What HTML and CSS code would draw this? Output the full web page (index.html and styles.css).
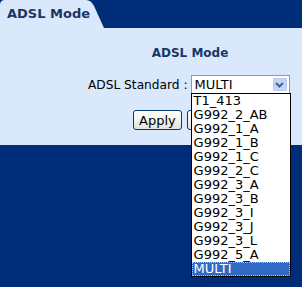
FILE: index.html
```html
<!DOCTYPE html>
<html lang="en">
<head>
  <meta charset="UTF-8" />
  <title>ADSL Mode</title>
  <link rel="stylesheet" href="styles.css">
</head>
<body>
  <div class="tab-bar">
    <div class="tab">
      <svg class="tab-shape" width="106" height="28" viewBox="0 0 106 28">
        <path d="M0 28 L0 5 Q0 0 5 0 L86 0 Q91 0 94 6 L104 28 Z" fill="#d9e9fb"/>
      </svg>
      <span class="tab-title">ADSL Mode</span>
    </div>
  </div>

  <div class="panel">
    <h1>ADSL Mode</h1>
    <div class="form-row">
      <label for="standard">ADSL Standard :</label>
      <div class="select-box">
        <div class="select">
          <span class="select-value">MULTI</span>
          <span class="select-arrow">
            <svg width="9" height="6" viewBox="0 0 9 6"><path d="M1 1 L4.5 4.5 L8 1" stroke="#4d6185" stroke-width="2" fill="none"/></svg>
          </span>
        </div>
        <ul class="select-list">
          <li>T1_413</li>
          <li>G992_2_AB</li>
          <li>G992_1_A</li>
          <li>G992_1_B</li>
          <li>G992_1_C</li>
          <li>G992_2_C</li>
          <li>G992_3_A</li>
          <li>G992_3_B</li>
          <li>G992_3_I</li>
          <li>G992_3_J</li>
          <li>G992_3_L</li>
          <li>G992_5_A</li>
          <li class="selected">MULTI</li>
        </ul>
      </div>
    </div>
    <div class="buttons">
      <button type="button" class="btn">Apply</button>
      <button type="button" class="btn">Cancel</button>
    </div>
  </div>
</body>
</html>
```

FILE: styles.css
```css
* {
  box-sizing: border-box;
  margin: 0;
  padding: 0;
}

body {
  background: #002d79;
  font-family: "DejaVu Sans", Verdana, sans-serif;
  width: 302px;
  height: 287px;
  overflow: hidden;
}

.tab-bar {
  height: 28px;
}

.tab {
  position: relative;
  width: 106px;
  height: 28px;
}

.tab-shape {
  position: absolute;
  left: 0;
  top: 0;
}

.tab-title {
  position: relative;
  display: block;
  padding: 6px 0 0 7px;
  font-size: 13px;
  font-weight: bold;
  color: #1b3566;
}

.panel {
  background: #d9e9fb;
  height: 117px;
  padding-top: 18px;
}

h1 {
  font-size: 12px;
  font-weight: bold;
  color: #1b3566;
  text-align: center;
  margin-left: 78px;
  line-height: 14px;
}

.form-row {
  display: flex;
  align-items: center;
  margin-top: 15px;
  padding-left: 88px;
}

label {
  font-size: 12.2px;
  color: #000;
  margin-right: 3px;
}

.select-box {
  position: relative;
}

.select {
  display: flex;
  align-items: center;
  width: 99px;
  height: 19px;
  background: #fff;
  border: 1px solid #7f9db9;
}

.select-value {
  flex: 1;
  font-size: 13px;
  padding-left: 3px;
}

.select-arrow {
  display: flex;
  align-items: center;
  justify-content: center;
  width: 14px;
  height: 13px;
  margin-right: 2px;
  background: #c4d5fa;
  border: 1px solid #b9cbf3;
  border-radius: 1px;
}

.select-list {
  position: absolute;
  left: 0;
  top: 18px;
  width: 100px;
  list-style: none;
  background: #fff;
  border: 1px solid #000;
  z-index: 2;
}

.select-list li {
  height: 14px;
  line-height: 14px;
  font-size: 13px;
  padding-left: 2px;
  color: #000;
}

.select-list li.selected {
  background: #316ac5;
  color: #fff;
  outline: 1px dotted #c0c0c0;
  outline-offset: -1px;
}

.buttons {
  display: flex;
  gap: 5px;
  margin-top: 16px;
  padding-left: 133px;
}

.btn {
  height: 20px;
  padding: 0 5px;
  font-family: "DejaVu Sans", Verdana, sans-serif;
  font-size: 13px;
  line-height: 17px;
  color: #000;
  background: linear-gradient(#ffffff, #e3e3dc);
  border: 1px solid #003c74;
  border-radius: 3px;
}
```
